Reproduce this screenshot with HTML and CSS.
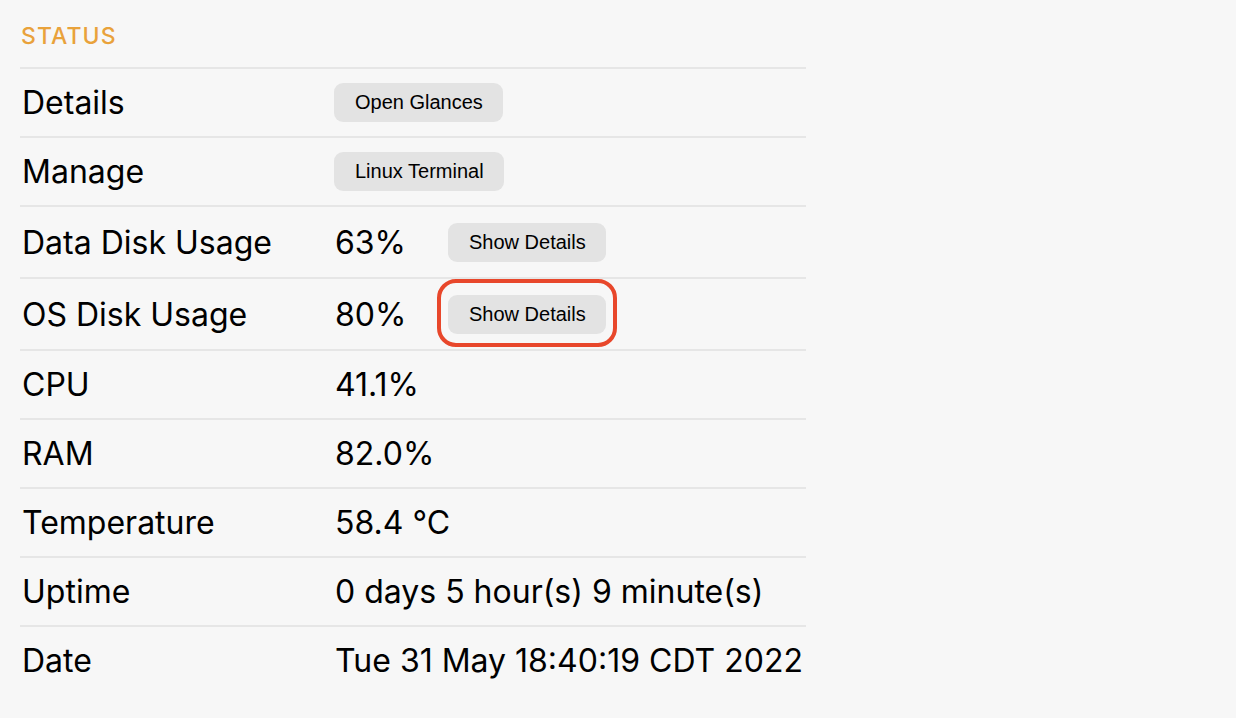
FILE: index.html
```html
<!DOCTYPE html>
<html>
<head>
<meta charset="utf-8">
<link rel="stylesheet" href="styles.css">
</head>
<body>
<section class="status">
  <h2 class="status-title">STATUS</h2>
  <div class="status-table">
    <div class="row">
      <div class="label">Details</div>
      <div class="value"><button class="btn">Open Glances</button></div>
    </div>
    <div class="row">
      <div class="label">Manage</div>
      <div class="value"><button class="btn">Linux Terminal</button></div>
    </div>
    <div class="row row-tall">
      <div class="label">Data Disk Usage</div>
      <div class="value"><span class="pct">63%</span><button class="btn">Show Details</button></div>
    </div>
    <div class="row row-tall">
      <div class="label">OS Disk Usage</div>
      <div class="value"><span class="pct">80%</span><span class="highlight"><button class="btn">Show Details</button></span></div>
    </div>
    <div class="row">
      <div class="label">CPU</div>
      <div class="value">41.1%</div>
    </div>
    <div class="row">
      <div class="label">RAM</div>
      <div class="value">82.0%</div>
    </div>
    <div class="row">
      <div class="label">Temperature</div>
      <div class="value">58.4 °C</div>
    </div>
    <div class="row">
      <div class="label">Uptime</div>
      <div class="value">0 days 5 hour(s) 9 minute(s)</div>
    </div>
    <div class="row">
      <div class="label">Date</div>
      <div class="value">Tue 31 May 18:40:19 CDT 2022</div>
    </div>
  </div>
</section>
</body>
</html>
```
FILE: styles.css
```css
html, body {
  margin: 0;
  padding: 0;
  background: #f7f7f7;
}
body {
  font-family: Inter, "Noto Sans", sans-serif;
  color: #000;
}
.status {
  width: 786px;
  margin-left: 20px;
  padding-top: 22px;
}
.status-title {
  margin: 0 0 17px 1px;
  font-size: 23px;
  line-height: 28px;
  font-weight: 500;
  letter-spacing: 1.1px;
  color: #e9a23b;
}
.row {
  display: grid;
  grid-template-columns: 315px 1fr;
  align-items: center;
  height: 67px;
  border-top: 2px solid #e6e6e6;
  font-size: 32px;
}
.row-tall {
  height: 70px;
}
.label {
  padding-left: 2px;
}
.value {
  display: flex;
  align-items: center;
}
.pct {
  width: 114px;
}
.btn {
  font-family: "Liberation Sans", Arial, sans-serif;
  font-size: 20px;
  height: 39px;
  padding: 0 20px 0 21px;
  border: none;
  border-radius: 9px;
  background: #e3e3e3;
  color: #000;
  margin-left: -1px;
}
.highlight {
  position: relative;
  display: inline-flex;
}
.highlight::after {
  content: "";
  position: absolute;
  left: -12px;
  right: -11px;
  top: -16px;
  bottom: -13px;
  border: 4px solid #e8472b;
  border-radius: 19px;
}
```
